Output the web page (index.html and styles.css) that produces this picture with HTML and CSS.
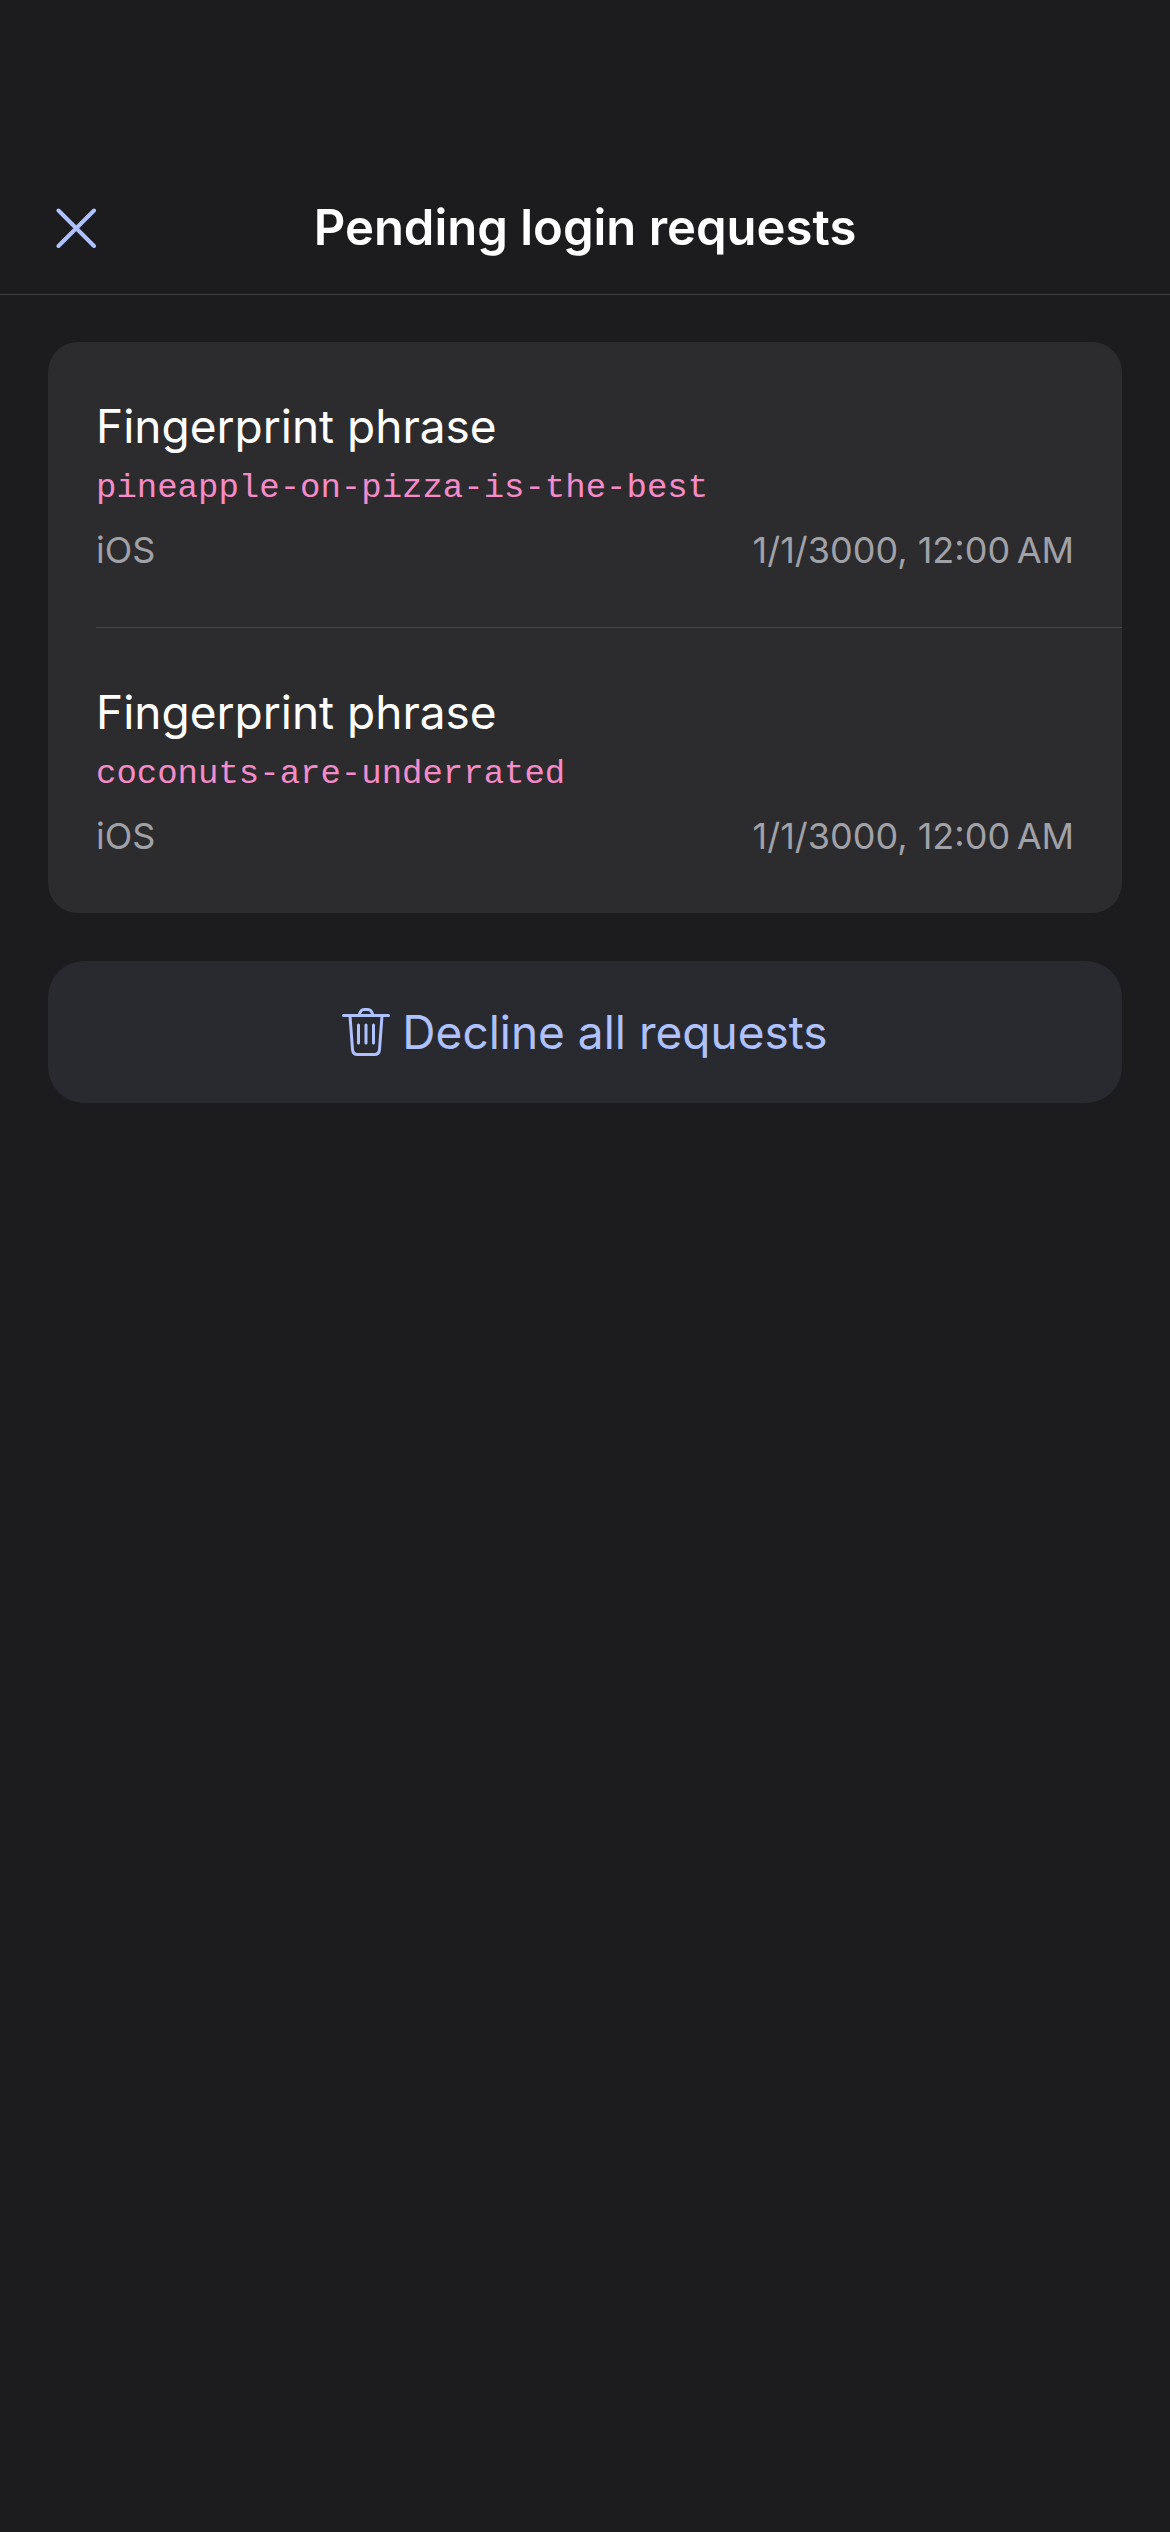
FILE: index.html
```html
<!DOCTYPE html>
<html lang="en">
<head>
<meta charset="utf-8">
<meta name="viewport" content="width=device-width, initial-scale=1">
<title>Pending login requests</title>
<link rel="stylesheet" href="styles.css">
</head>
<body>
<header class="nav">
  <button class="close" type="button" aria-label="Close">
    <svg class="close-icon" viewBox="0 0 40 40" aria-hidden="true"><path d="M2.5 2.5 38 38M38 2.5 2.5 38"/></svg>
  </button>
  <h1 class="title">Pending login requests</h1>
</header>
<main class="content">
  <ul class="card">
    <li class="request">
      <h2 class="label">Fingerprint phrase</h2>
      <p class="phrase">pineapple-on-pizza-is-the-best</p>
      <div class="meta"><span>iOS</span><time>1/1/3000, 12:00&#8239;AM</time></div>
    </li>
    <li class="request">
      <h2 class="label">Fingerprint phrase</h2>
      <p class="phrase">coconuts-are-underrated</p>
      <div class="meta"><span>iOS</span><time>1/1/3000, 12:00&#8239;AM</time></div>
    </li>
  </ul>
  <button class="decline" type="button">
    <svg class="trash" viewBox="0 0 48 48" aria-hidden="true">
      <path d="M1.5 7.5H46.5M17 7.5Q18.5 1.5 22 1.5H26Q29.5 1.5 31 7.5M8 8 10.5 41.5Q11 46.5 15.5 46.5H32.5Q37 46.5 37.5 41.5L40 8"/>
      <path d="M16.5 17V35M24 17V35M31.5 17V35"/>
    </svg>
    <span>Decline all requests</span>
  </button>
</main>
</body>
</html>
```
FILE: styles.css
```css
* { box-sizing: border-box; margin: 0; padding: 0; }

body {
  min-height: 100vh;
  background: #1c1c1e;
  color: #fff;
  font-family: Inter, "Liberation Sans", sans-serif;
}

button { border: 0; font: inherit; cursor: pointer; }

.nav {
  display: grid;
  grid-template-columns: 60px 1fr 60px;
  align-items: center;
  padding-top: 162px;
  padding-inline: 48px;
  border-bottom: 1px solid #3c3c3f;
}

.close {
  display: flex;
  align-items: center;
  height: 132px;
  padding-left: 8px;
  background: none;
}

.close-icon {
  width: 40px;
  height: 40px;
  fill: none;
  stroke: #afc1ff;
  stroke-width: 4;
  stroke-linecap: round;
}

.title {
  text-align: center;
  font-size: 49px;
  line-height: 60px;
  font-weight: 600;
}

.content {
  display: flex;
  flex-direction: column;
  gap: 48px;
  padding: 47px 48px;
}

.card {
  list-style: none;
  padding-left: 48px;
  border-radius: 30px;
  background: #2c2c2e;
}

.request { padding: 54px 48px 50px 0; }
.request + .request { border-top: 1px solid #464649; }

.label {
  font-size: 46px;
  line-height: 60px;
  font-weight: 400;
}

.phrase {
  padding-top: 4px;
  color: #f58bc8;
  font-family: "Liberation Mono", monospace;
  font-size: 34px;
  line-height: 56px;
}

.meta {
  display: flex;
  justify-content: space-between;
  padding-top: 8px;
  color: #a1a1a8;
  font-size: 36px;
  line-height: 53px;
}

.decline {
  display: flex;
  align-items: center;
  justify-content: center;
  gap: 12px;
  height: 142px;
  border-radius: 36px;
  background: #292a2f;
  color: #afc1ff;
  font-size: 46px;
  line-height: 60px;
}

.trash {
  width: 48px;
  height: 48px;
  fill: none;
  stroke: currentColor;
  stroke-width: 3;
  stroke-linecap: round;
  stroke-linejoin: round;
}
```
